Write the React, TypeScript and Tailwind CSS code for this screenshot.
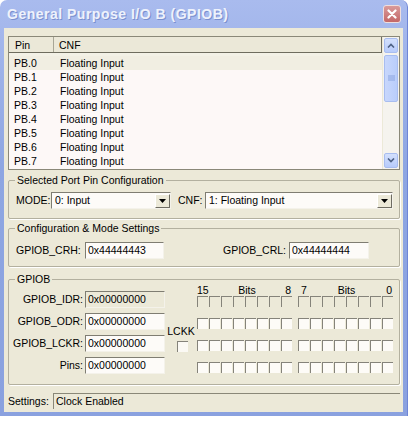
import React from "react";

const pins = ["PB.0", "PB.1", "PB.2", "PB.3", "PB.4", "PB.5", "PB.6", "PB.7"];

export default function App() {
  return (
    <div className="h-[424px] w-[416px] bg-white font-['Liberation_Sans',Arial,sans-serif] text-[10.5px] leading-[13px] text-black">
      <div className="flex h-[416px] w-[408px] flex-col rounded-t-[7px] border-r border-[#6f86d6] bg-[linear-gradient(#a9bbee,#8ea6e2_40%,#8aa1df)]">
        {/* Title bar */}
        <div className="flex h-[28px] items-center justify-between pl-[7px] pr-[6px]">
          <span className="pt-[1px] text-[14px] font-bold tracking-[0.5px] text-[#eef2fc] [text-shadow:1px_1px_0_#7a90cf]">
            General Purpose I/O B (GPIOB)
          </span>
          <button
            type="button"
            className="flex h-[18px] w-[18px] items-center justify-center rounded-[3px] border border-[#eedede] bg-[linear-gradient(#d99a9a,#c46868)]"
          >
            <svg width="10" height="10" viewBox="0 0 10 10">
              <path d="M1.5 1.5 L8.5 8.5 M8.5 1.5 L1.5 8.5" stroke="#fff" strokeWidth="2.2" strokeLinecap="round" />
            </svg>
          </button>
        </div>

        {/* Body */}
        <div className="mx-[4px] mb-[4px] flex flex-1 flex-col bg-[#ece9d8] pl-[4px] pr-[3px] pt-[8px]">
          {/* Pin list */}
          <div className="flex h-[134px] border border-[#8a8878] bg-[#fdf8f7]">
            <div className="flex flex-1 flex-col">
              <div className="flex h-[16px] border-b border-r border-[#6e6c5e] bg-[#ebe8d8]">
                <div className="w-[45px] border-r border-[#a8a696] pl-[6px] pt-[2px]">Pin</div>
                <div className="pl-[5px] pt-[2px]">CNF</div>
              </div>
              <div className="h-[3px] bg-[#f3f1e6]" />
              {pins.map((p, i) => (
                <div key={p} className={`flex h-[14px] items-center ${i === 0 ? "bg-[#f1eee2]" : ""}`}>
                  <span className="w-[46px] pl-[5px]">{p}</span>
                  <span className="pl-[5px]">Floating Input</span>
                </div>
              ))}
            </div>
            {/* Scrollbar */}
            <div className="flex w-[17px] flex-col border-l border-[#ece9d8] bg-[#f5f3ee] px-[1px] py-[1px]">
              <ScrollBtn dir="up" />
              <div className="mt-[2px] flex h-[47px] items-center justify-center rounded-[2px] border border-[#a8bdf0] bg-[linear-gradient(90deg,#c8d7fc,#b9cdfb)]">
                <svg width="7" height="7" viewBox="0 0 7 7">
                  <path d="M0 1h7M0 3h7M0 5h7" stroke="#8aa3df" strokeWidth="1" />
                </svg>
              </div>
              <div className="flex-1" />
              <ScrollBtn dir="down" />
            </div>
          </div>

          {/* Selected Port Pin Configuration */}
          <Group title="Selected Port Pin Configuration" className="mt-[10px] h-[39px] pt-[11px]">
            <div className="flex items-center pl-[7px]">
              <span className="w-[35px]">MODE:</span>
              <Select w="w-[120px]" value="0: Input" />
              <span className="ml-[7px] w-[27px]">CNF:</span>
              <Select w="w-[188px]" value="1: Floating Input" />
            </div>
          </Group>

          {/* Configuration & Mode Settings */}
          <Group title="Configuration & Mode Settings" className="mt-[9px] h-[39px] pt-[13px]">
            <div className="flex items-center pl-[7px]">
              <span className="w-[69px]">GPIOB_CRH:</span>
              <Field w="w-[79px]" value="0x44444443" />
              <span className="ml-[59px] w-[66px]">GPIOB_CRL:</span>
              <Field w="w-[80px]" value="0x44444444" />
            </div>
          </Group>

          {/* GPIOB */}
          <Group title="GPIOB" className="mt-[12px] h-[106px] pt-[4px]">
            <div className="flex items-start">
              <div className="mt-[7px] flex w-[156px] flex-col gap-[5px]">
                {[
                  ["GPIOB_IDR:", true],
                  ["GPIOB_ODR:", false],
                  ["GPIOB_LCKR:", false],
                  ["Pins:", false],
                ].map(([label, ro]) => (
                  <div key={label as string} className="flex items-center justify-end gap-[2px]">
                    <span>{label as string}</span>
                    <Field w="w-[80px]" value="0x00000000" readOnly={ro as boolean} />
                  </div>
                ))}
              </div>
              <div className="mt-[41px] flex w-[32px] flex-col items-center">
                <span>LCKK</span>
                <span className="mt-[3px] ml-[2px] h-[11px] w-[11px] border-l border-t border-[#85837a] bg-[#fbf9f4]" />
              </div>
              <div className="flex flex-col">
                <div className="flex h-[12px] gap-[6px]">
                  <div className="flex w-[96px] justify-between pr-[2px]">
                    <span>15</span>
                    <span>Bits</span>
                    <span>8</span>
                  </div>
                  <div className="flex w-[96px] justify-between pl-[2px] pr-[3px]">
                    <span>7</span>
                    <span>Bits</span>
                    <span>0</span>
                  </div>
                </div>
                <div className="flex flex-col gap-[11px]">
                  {[0, 1, 2, 3].map((r) => (
                    <div key={r} className="flex gap-[6px]">
                      {[0, 1].map((g) => (
                        <div key={g} className="flex gap-[1px]">
                          {[0, 1, 2, 3, 4, 5, 6, 7].map((b) => (
                            <span
                              key={b}
                              className={`h-[11px] w-[11px] border-l border-t border-[#85837a] ${r === 0 ? "bg-[#ece9d8]" : "bg-[#fdfbf7]"}`}
                            />
                          ))}
                        </div>
                      ))}
                    </div>
                  ))}
                </div>
              </div>
            </div>
          </Group>

          {/* Settings status */}
          <div className="mt-[8px] flex h-[16px] items-center">
            <span className="w-[45px]">Settings:</span>
            <div className="flex h-[16px] flex-1 items-center border-l border-t border-[#8a8878] pl-[2px]">
              Clock Enabled
            </div>
          </div>
        </div>
      </div>
    </div>
  );
}

function Group({ title, className, children }: { title: string; className: string; children: React.ReactNode }) {
  return (
    <div className={`relative rounded-[2px] border border-[#b3b09f] shadow-[1px_1px_0_#fff] ${className}`}>
      <span className="absolute -top-[7px] left-[6px] bg-[#ece9d8] px-[2px]">{title}</span>
      {children}
    </div>
  );
}

function Field({ w, value, readOnly }: { w: string; value: string; readOnly?: boolean }) {
  return (
    <div
      className={`flex h-[17px] items-center border-b border-l border-r border-t border-b-[#f4f2ea] border-l-[#7f7d72] border-r-[#f4f2ea] border-t-[#7f7d72] pl-[2px] ${w} ${readOnly ? "bg-[#ece9d8]" : "bg-[#fdfbf8]"}`}
    >
      {value}
    </div>
  );
}

function Select({ w, value }: { w: string; value: string }) {
  return (
    <div
      className={`flex h-[17px] items-center border border-b-[#f4f2ea] border-l-[#7f7d72] border-r-[#f4f2ea] border-t-[#7f7d72] bg-[#fdfbf8] pl-[3px] ${w}`}
    >
      <span className="flex-1">{value}</span>
      <span className="flex h-[14px] w-[15px] items-center justify-center border border-b-[#6e6c62] border-l-white border-r-[#6e6c62] border-t-white bg-[#ece9d8]">
        <svg width="7" height="4" viewBox="0 0 7 4">
          <path d="M0 0h7L3.5 4z" fill="#000" />
        </svg>
      </span>
    </div>
  );
}

function ScrollBtn({ dir }: { dir: "up" | "down" }) {
  return (
    <div className="flex h-[15px] items-center justify-center rounded-[2px] border border-[#a8bdf0] bg-[linear-gradient(#d3e0fd,#b7cbfb)]">
      <svg width="8" height="5" viewBox="0 0 8 5">
        <path
          d={dir === "up" ? "M1 4.5 L4 1.5 L7 4.5" : "M1 0.5 L4 3.5 L7 0.5"}
          stroke="#4d6185"
          strokeWidth="1.6"
          fill="none"
        />
      </svg>
    </div>
  );
}
